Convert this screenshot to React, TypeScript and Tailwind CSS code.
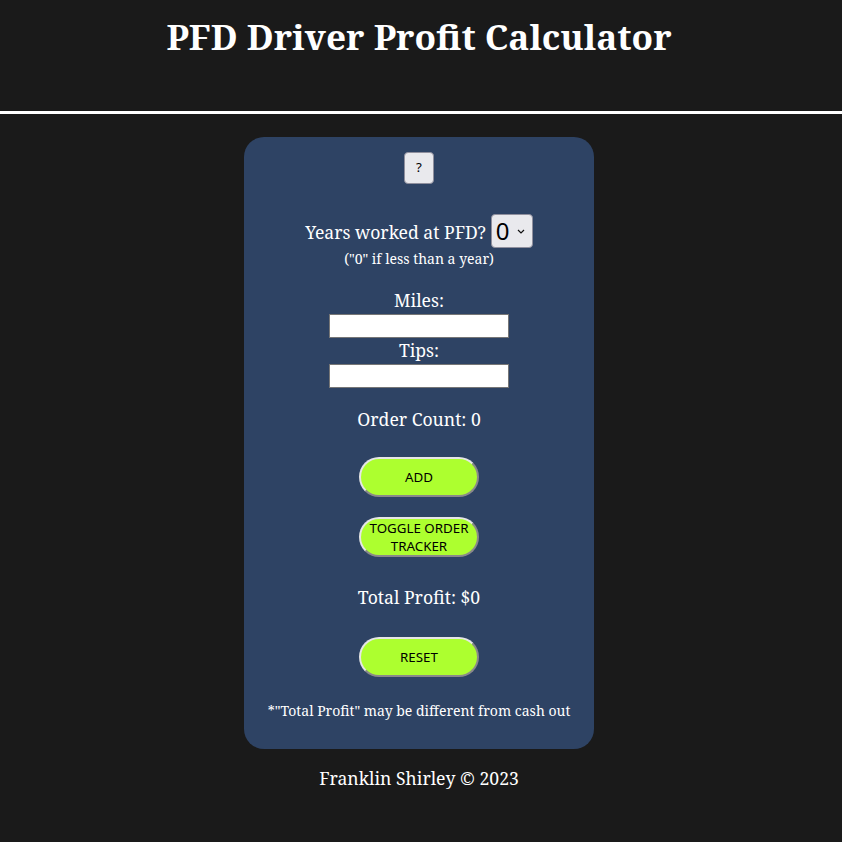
import React from "react";

const serif = { fontFamily: '"Noto Serif", "DejaVu Serif", serif' };

function PillButton({ children }: { children: React.ReactNode }) {
  return (
    <button
      className="w-[120px] h-[40px] rounded-full bg-[#adff2f] text-black text-[13.33px] leading-[18px] border-2 border-t-[#e6e6e6] border-l-[#e6e6e6] border-r-[#8a8a8a] border-b-[#8a8a8a] px-1"
      style={{ fontFamily: '"Noto Sans", "Open Sans", sans-serif', borderStyle: "solid" }}
    >
      {children}
    </button>
  );
}

export default function App() {
  return (
    <div className="min-h-[842px] bg-[#1a1a1a] text-white" style={serif}>
      <header className="h-[114px] border-b-[3px] border-white">
        <div className="w-[838px] flex justify-center">
          <h1 className="text-[35.2px] font-bold leading-none mt-[19px]">PFD Driver Profit Calculator</h1>
        </div>
      </header>
      <div className="w-[838px]">
        <div className="flex justify-center pt-[23px]">
          <div className="w-[350px] h-[612px] bg-[#2e4364] rounded-[20px] flex flex-col items-center pt-[15px]">
            <button
              className="w-[30px] h-[32px] bg-[#e9e9ed] text-black text-[13.33px] rounded-[4px] border border-[#8f8f9d]"
              style={{ fontFamily: '"Noto Sans", sans-serif' }}
            >
              ?
            </button>
            <div className="mt-[30px] flex items-center gap-[5px]">
              <span className="text-[17.6px] mt-[2px]">Years worked at PFD?</span>
              <div
                className="w-[42px] h-[34px] bg-[#e9e9ed] rounded-[4px] border border-[#8f8f9d] flex items-center justify-between pl-[4px] pr-[7px] text-black"
                style={{ fontFamily: '"Noto Sans", sans-serif' }}
              >
                <span className="text-[24px] leading-none">0</span>
                <svg width="8" height="5" viewBox="0 0 8 5">
                  <path d="M1 1 L4 4 L7 1" stroke="#111" strokeWidth="1.2" fill="none" />
                </svg>
              </div>
            </div>
            <div className="text-[14px] leading-[20px] mt-[1px]">("0" if less than a year)</div>
            <div className="text-[17.6px] leading-[24px] mt-[19px]">Miles:</div>
            <input className="w-[180px] h-[24px] bg-white border border-[#767676] mt-[2px]" />
            <div className="text-[17.6px] leading-[24px]">Tips:</div>
            <input className="w-[180px] h-[24px] bg-white border border-[#767676] mt-[2px]" />
            <div className="text-[17.6px] leading-[24px] mt-[19px]">Order Count: 0</div>
            <div className="mt-[26px]">
              <PillButton>ADD</PillButton>
            </div>
            <div className="mt-[20px]">
              <PillButton>TOGGLE ORDER TRACKER</PillButton>
            </div>
            <div className="text-[17.6px] leading-[24px] mt-[28px]">Total Profit: $0</div>
            <div className="mt-[28px]">
              <PillButton>RESET</PillButton>
            </div>
            <div className="text-[14px] leading-[20px] mt-[24px]">*"Total Profit" may be different from cash out</div>
          </div>
        </div>
        <div className="text-center text-[17.6px] leading-[24px] mt-[17px]">Franklin Shirley © 2023</div>
      </div>
    </div>
  );
}
